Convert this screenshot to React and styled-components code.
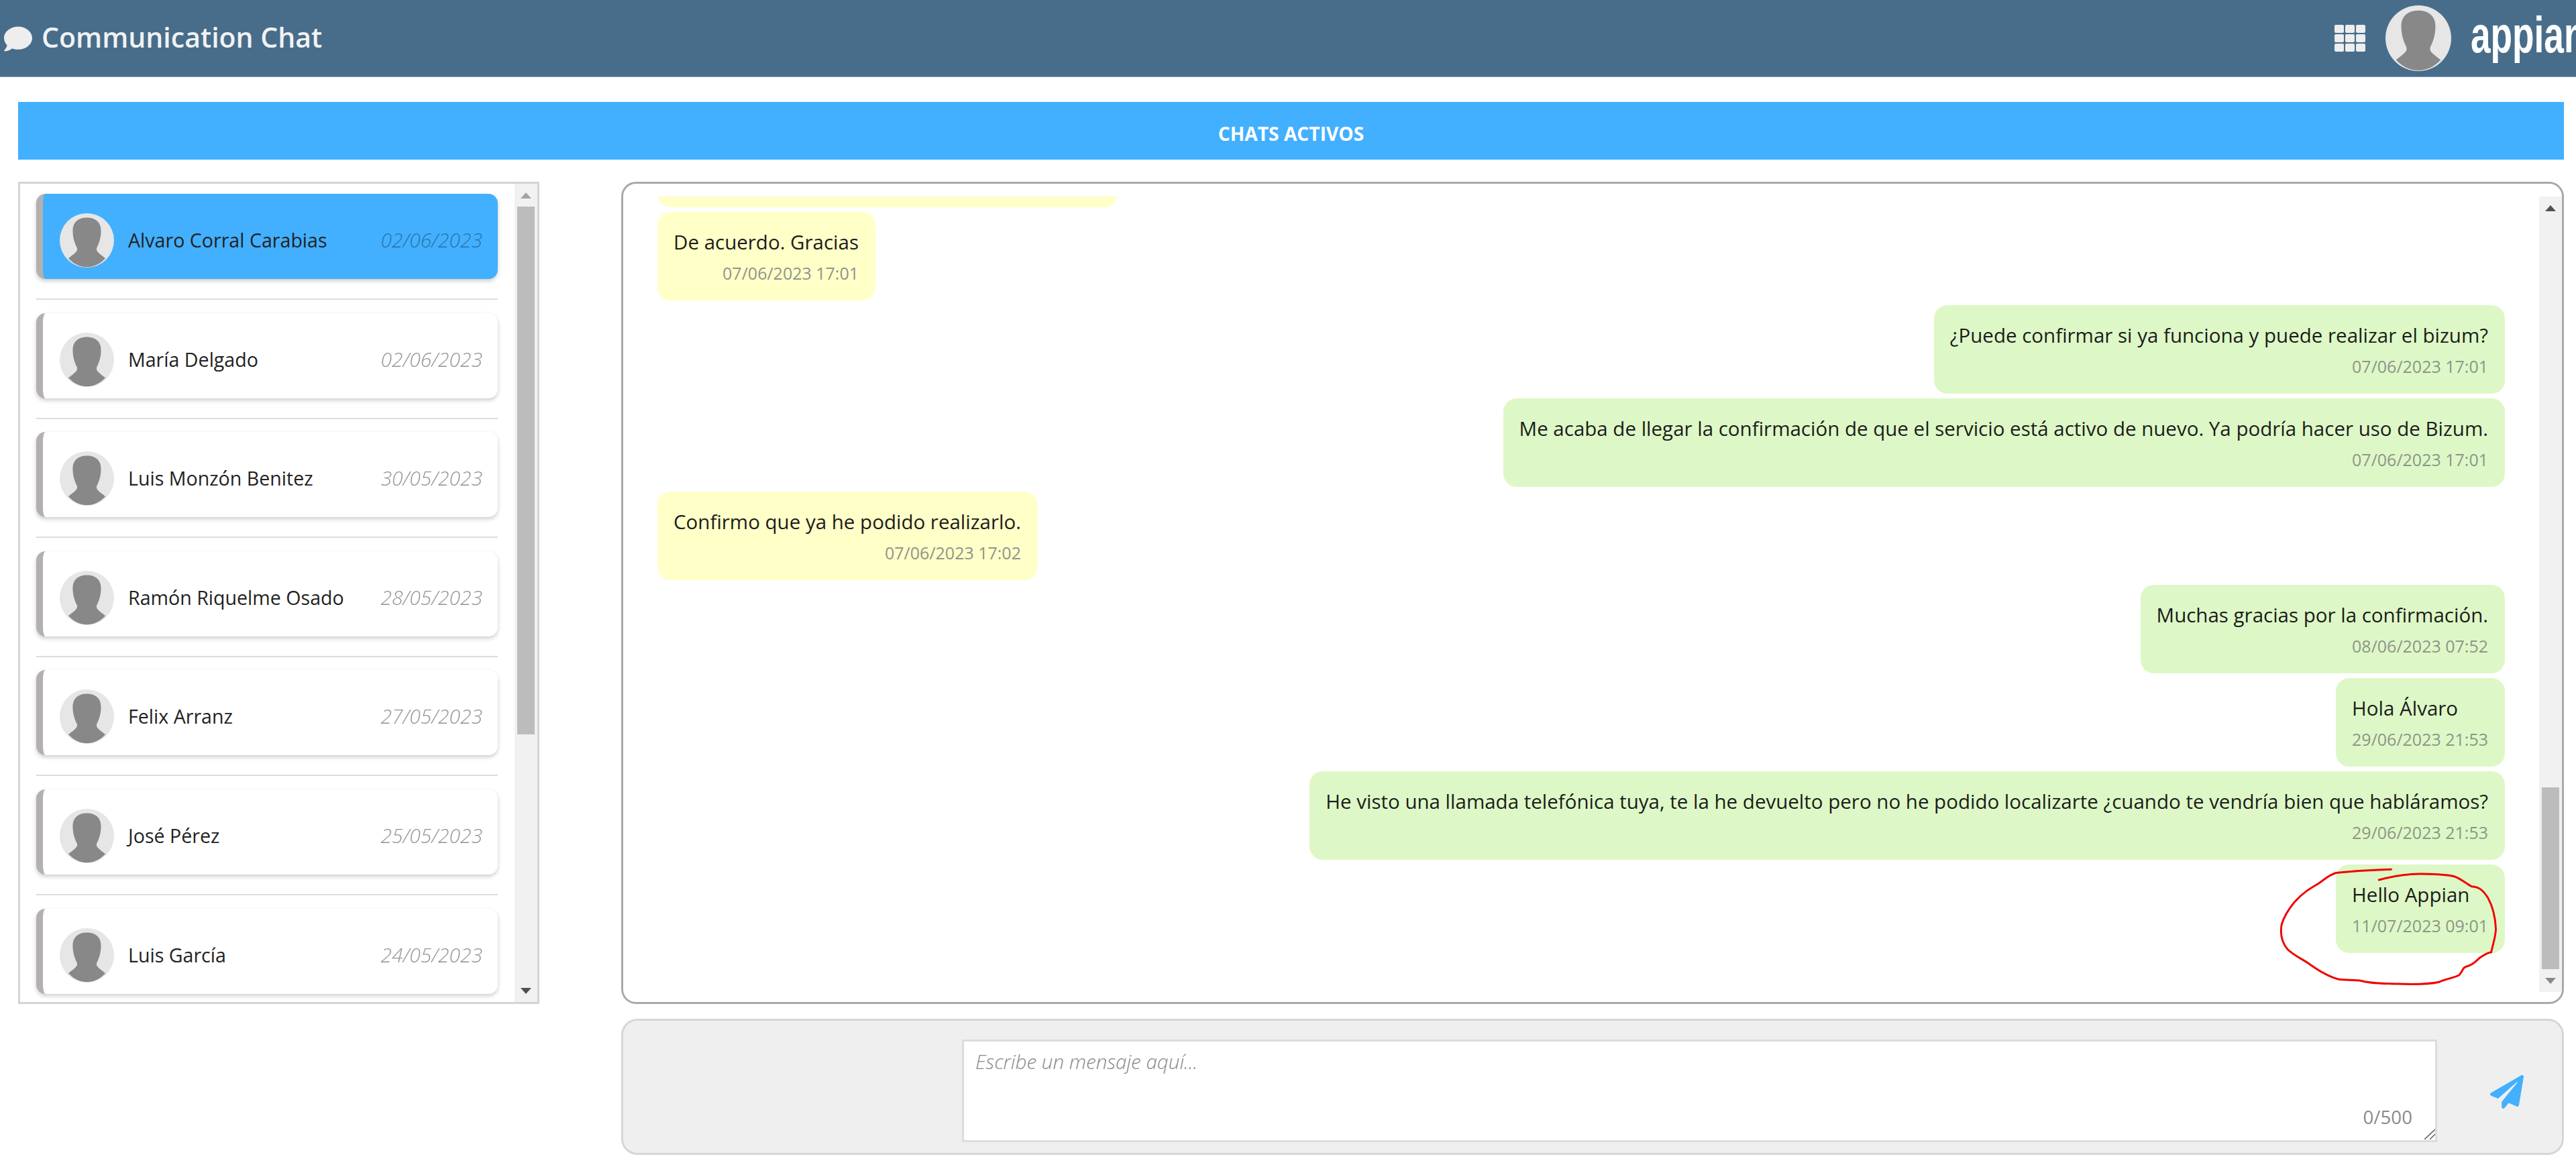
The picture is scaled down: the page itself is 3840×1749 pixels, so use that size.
import React from 'react';
import styled, { createGlobalStyle } from 'styled-components';
import { FaComment, FaPaperPlane } from 'react-icons/fa';

const GlobalStyle = createGlobalStyle`
    html, body {
        margin: 0;
        padding: 0;
        background: #fff;
        overflow: hidden;
        font-family: "Open Sans", "Liberation Sans", sans-serif;
    }
    * {
        box-sizing: border-box;
    }
`;

const Page = styled.div`
    width: 3840px;
    height: 1749px;
    display: flex;
    flex-direction: column;
`;

const Header = styled.header`
    height: 115px;
    display: flex;
    align-items: center;
    background: #476d8b;
    border-bottom: 1px solid #7d9ab3;
    padding-left: 6px;
`;

const ChatIcon = styled(FaComment)`
    width: 42px;
    height: 42px;
    color: #eeeeee;
    margin-top: 2px;
`;

const Title = styled.h1`
    margin: -5px 0 0 14px;
    font-size: 41px;
    font-weight: 600;
    color: #f2f2f2;
`;

const HeaderRight = styled.div`
    margin-left: auto;
    width: 360px;
    display: flex;
    align-items: center;
    gap: 30px;
    overflow: hidden;
`;

const AppsGrid = styled.div`
    flex: none;
    display: grid;
    grid-template-columns: repeat(3, 14px);
    grid-auto-rows: 12px;
    gap: 2px;
    span {
        background: #eeeeee;
        border-radius: 2px;
    }
`;

const AvatarSvg = styled.svg`
    flex: none;
    display: block;
    width: ${props => props.$size}px;
    height: ${props => props.$size}px;
`;

const Logo = styled.span`
    flex: none;
    margin: -10px 0 0 -1px;
    font-family: "Liberation Sans", sans-serif;
    font-size: 76px;
    line-height: 90px;
    font-weight: 700;
    color: #ffffff;
    transform: scaleX(0.7);
    transform-origin: left center;
`;

const Content = styled.main`
    flex: 1;
    padding: 37px 18px 0 27px;
`;

const SectionBar = styled.div`
    height: 86px;
    display: flex;
    align-items: center;
    justify-content: center;
    padding-top: 8px;
    background: #42b0ff;
    color: #fff;
    font-size: 28.2px;
    font-weight: 700;
`;

const Columns = styled.div`
    margin-top: 33px;
    display: grid;
    grid-template-columns: 777px 1fr;
    gap: 122px;
    align-items: start;
`;

const ListPanel = styled.section`
    height: 1226px;
    display: flex;
    border: 3px solid #d4d4d4;
`;

const ChatList = styled.div`
    flex: 1;
    min-width: 0;
    overflow: hidden;
    padding: 15px 25px 0 24px;
`;

const ChatCard = styled.div`
    height: 127px;
    display: flex;
    align-items: center;
    padding: 12px 23px 0 25px;
    border-left: 10px solid #b4b0b0;
    border-radius: 14px;
    background: ${props => (props.$active ? '#42b0ff' : '#fff')};
    box-shadow: 0 3px 6px rgba(0, 0, 0, 0.2);
`;

const ChatName = styled.span`
    margin: -2px 0 0 21px;
    font-size: 28.6px;
    color: #222;
`;

const ChatDate = styled.span`
    margin: -2px 0 0 auto;
    font-size: 30px;
    font-style: italic;
    font-weight: 300;
    color: rgba(0, 0, 0, ${props => (props.$active ? 0.38 : 0.45)});
`;

const Divider = styled.hr`
    margin: 29px 0 19.6px;
    border: 0;
    height: 2px;
    background: #dcdcdc;
`;

const ScrollTrack = styled.div`
    flex: none;
    width: 34px;
    display: flex;
    flex-direction: column;
    background: #f1f1f1;
`;

const ScrollArrow = styled.div`
    flex: none;
    height: 34px;
    display: flex;
    align-items: center;
    justify-content: center;
    &::before {
        content: '';
        border-left: 8px solid transparent;
        border-right: 8px solid transparent;
        border-${props => (props.$down ? 'top' : 'bottom')}: 9px solid ${props => props.$color};
    }
`;

const ThumbArea = styled.div`
    flex: 1;
    display: flex;
    flex-direction: column;
    justify-content: ${props => (props.$end ? 'flex-end' : 'flex-start')};
    align-items: center;
`;

const Thumb = styled.div`
    width: 26px;
    background: #bcbcbc;
`;

const RightColumn = styled.div`
    display: flex;
    flex-direction: column;
    gap: 22px;
`;

const ChatPanel = styled.section`
    height: 1226px;
    display: flex;
    padding: 19px 0 15px;
    border: 3px solid #a9a9a9;
    border-radius: 22px;
`;

const MessageScroller = styled.div`
    flex: 1;
    min-width: 0;
    display: flex;
    flex-direction: column;
    justify-content: flex-end;
    gap: 7px;
    overflow: hidden;
    padding: 0 51px 58px;
`;

const Bubble = styled.div`
    position: relative;
    flex: none;
    height: 132px;
    width: ${props => (props.$width ? `${props.$width}px` : 'fit-content')};
    align-self: ${props => (props.$mine ? 'flex-end' : 'flex-start')};
    padding: 25px 25px 21px 24px;
    border-radius: 20px;
    background: ${props => (props.$mine ? '#ddf8c6' : '#ffffc8')};
`;

const BubbleText = styled.div`
    font-size: 29.5px;
    line-height: 40px;
    color: #1c1c1c;
    white-space: nowrap;
`;

const BubbleTime = styled.div`
    margin-top: 6px;
    font-size: 25px;
    line-height: 40px;
    text-align: right;
    color: #8f948a;
`;

const Scribble = styled.svg`
    position: absolute;
    left: -86px;
    top: 2px;
    width: 328px;
    height: 182px;
    pointer-events: none;
`;

const Composer = styled.section`
    height: 203px;
    display: flex;
    align-items: center;
    padding-left: 505px;
    background: #efefef;
    border: 3px solid #d6d6d6;
    border-radius: 24px;
`;

const InputWrap = styled.div`
    position: relative;
    flex: none;
    width: 2199px;
    height: 153px;
    margin-top: 12px;
`;

const MessageInput = styled.textarea`
    display: block;
    width: 100%;
    height: 100%;
    margin: 0;
    padding: 10px 17px;
    border: 3px solid #dcdcdc;
    border-radius: 0;
    outline: none;
    background: #fff;
    font-family: inherit;
    font-size: 29.6px;
    line-height: 40px;
    resize: none;
    &::placeholder {
        color: #888;
        font-style: italic;
        font-weight: 300;
        opacity: 1;
    }
`;

const Counter = styled.span`
    position: absolute;
    right: 37px;
    bottom: 19px;
    font-size: 27.7px;
    color: #8a8a8a;
`;

const ResizeGrip = styled.svg`
    position: absolute;
    right: 3px;
    bottom: 4px;
    width: 16px;
    height: 16px;
`;

const SendButton = styled.button`
    display: flex;
    margin: 14px 0 0 79px;
    padding: 0;
    border: 0;
    background: none;
    color: #42b0ff;
    cursor: pointer;
`;

const SendIcon = styled(FaPaperPlane)`
    width: 50px;
    height: 50px;
`;

const chats = [
    { name: 'Alvaro Corral Carabias', date: '02/06/2023', active: true },
    { name: 'María Delgado', date: '02/06/2023' },
    { name: 'Luis Monzón Benitez', date: '30/05/2023' },
    { name: 'Ramón Riquelme Osado', date: '28/05/2023' },
    { name: 'Felix Arranz', date: '27/05/2023' },
    { name: 'José Pérez', date: '25/05/2023' },
    { name: 'Luis García', date: '24/05/2023' },
];

const messages = [
    { text: 'De acuerdo. Gracias', time: '07/06/2023 17:01' },
    { text: '¿Puede confirmar si ya funciona y puede realizar el bizum?', time: '07/06/2023 17:01', mine: true },
    { text: 'Me acaba de llegar la confirmación de que el servicio está activo de nuevo. Ya podría hacer uso de Bizum.', time: '07/06/2023 17:01', mine: true },
    { text: 'Confirmo que ya he podido realizarlo.', time: '07/06/2023 17:02' },
    { text: 'Muchas gracias por la confirmación.', time: '08/06/2023 07:52', mine: true },
    { text: 'Hola Álvaro', time: '29/06/2023 21:53', mine: true },
    { text: 'He visto una llamada telefónica tuya, te la he devuelto pero no he podido localizarte ¿cuando te vendría bien que habláramos?', time: '29/06/2023 21:53', mine: true },
    { text: 'Hello Appian', time: '11/07/2023 09:01', mine: true, circled: true },
];

const Avatar = ({ size }) => (
    <AvatarSvg $size={size} viewBox="0 0 100 100">
        <circle cx="50" cy="50" r="50" fill="#e6e6e6" />
        <path
            fill="#888888"
            d="M50 8C36 8 24 15 24 32C24 46 28 56 32 64C33 70 30 72 16 83C26 94 38 99 50 99C62 99 74 94 84 83C70 72 67 70 68 64C72 56 76 46 76 32C76 15 64 8 50 8Z"
        />
    </AvatarSvg>
);

const Scrollbar = ({ thumb, end, upColor, downColor }) => (
    <ScrollTrack>
        <ScrollArrow $color={upColor} />
        <ThumbArea $end={end}>
            <Thumb style={{ height: thumb }} />
        </ThumbArea>
        <ScrollArrow $down $color={downColor} />
    </ScrollTrack>
);

const App = () => {
    return (
        <Page>
            <GlobalStyle />
            <Header>
                <ChatIcon />
                <Title>Communication Chat</Title>
                <HeaderRight>
                    <AppsGrid>
                        {Array.from({ length: 9 }, (_, i) => (
                            <span key={i} />
                        ))}
                    </AppsGrid>
                    <Avatar size={98} />
                    <Logo>appian</Logo>
                </HeaderRight>
            </Header>
            <Content>
                <SectionBar>CHATS ACTIVOS</SectionBar>
                <Columns>
                    <ListPanel>
                        <ChatList>
                            {chats.map(({ name, date, active }, i) => (
                                <React.Fragment key={name}>
                                    <ChatCard $active={active}>
                                        <Avatar size={81} />
                                        <ChatName>{name}</ChatName>
                                        <ChatDate $active={active}>{date}</ChatDate>
                                    </ChatCard>
                                    {i < chats.length - 1 && <Divider />}
                                </React.Fragment>
                            ))}
                        </ChatList>
                        <Scrollbar thumb={787} upColor="#a3a3a3" downColor="#505050" />
                    </ListPanel>
                    <RightColumn>
                        <ChatPanel>
                            <MessageScroller>
                                <Bubble $width={686} />
                                {messages.map(({ text, time, mine, circled }) => (
                                    <Bubble key={text} $mine={mine}>
                                        <BubbleText>{text}</BubbleText>
                                        <BubbleTime>{time}</BubbleTime>
                                        {circled && (
                                            <Scribble viewBox="280 260 950 520" preserveAspectRatio="none">
                                                <path
                                                    fill="none"
                                                    stroke="#f00000"
                                                    strokeWidth="8.5"
                                                    strokeLinecap="round"
                                                    d="M768 275C700 277 600 282 530 290C500 298 480 318 455 335C420 355 385 375 350 415C325 445 305 475 295 510C288 550 295 585 320 615C345 640 380 655 410 675C445 700 490 730 540 743C570 748 610 745 640 750C680 762 740 762 800 763C860 765 930 765 975 755C1000 742 1040 738 1062 725C1075 712 1075 695 1090 690C1115 685 1130 670 1150 652C1170 638 1185 630 1200 628C1205 600 1218 570 1220 530C1218 480 1205 430 1185 395C1165 365 1150 350 1115 348C1090 335 1070 315 1040 305C1000 295 950 295 890 294C830 294 770 305 715 320"
                                                />
                                            </Scribble>
                                        )}
                                    </Bubble>
                                ))}
                            </MessageScroller>
                            <Scrollbar thumb={271} end upColor="#505050" downColor="#8a8a8a" />
                        </ChatPanel>
                        <Composer>
                            <InputWrap>
                                <MessageInput placeholder="Escribe un mensaje aquí..." />
                                <Counter>0/500</Counter>
                                <ResizeGrip viewBox="0 0 16 16">
                                    <path d="M0 16L16 1M8 16L16 8" stroke="#555" strokeWidth="1.4" fill="none" />
                                </ResizeGrip>
                            </InputWrap>
                            <SendButton aria-label="Enviar">
                                <SendIcon />
                            </SendButton>
                        </Composer>
                    </RightColumn>
                </Columns>
            </Content>
        </Page>
    );
};

export default App;
